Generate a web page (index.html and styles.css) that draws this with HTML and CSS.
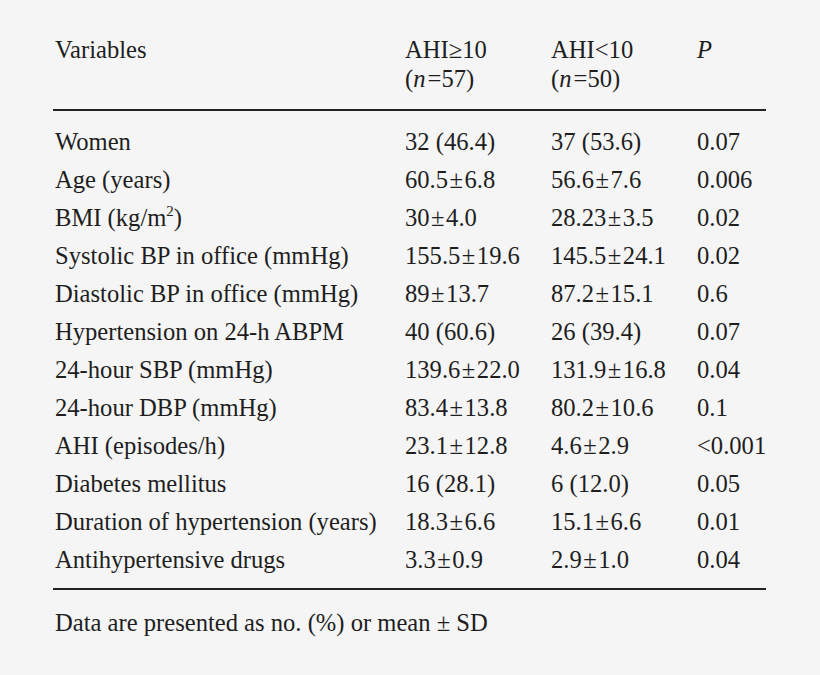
FILE: index.html
```html
<!DOCTYPE html>
<html>
<head>
<meta charset="utf-8">
<link rel="stylesheet" href="styles.css">
</head>
<body>
<div class="page">
  <div class="head">
    <div class="c1">Variables</div>
    <div class="c2">AHI≥10<br>(<i>n</i>&#8202;=57)</div>
    <div class="c3">AHI&lt;10<br>(<i>n</i>&#8202;=50)</div>
    <div class="c4"><i>P</i></div>
  </div>
  <div class="body">
    <div class="row"><div>Women</div><div>32 (46.4)</div><div>37 (53.6)</div><div>0.07</div></div>
    <div class="row"><div>Age (years)</div><div>60.5<span class="pm">±</span>6.8</div><div>56.6<span class="pm">±</span>7.6</div><div>0.006</div></div>
    <div class="row"><div>BMI (kg/m<sup>2</sup>)</div><div>30<span class="pm">±</span>4.0</div><div>28.23<span class="pm">±</span>3.5</div><div>0.02</div></div>
    <div class="row"><div>Systolic BP in office (mmHg)</div><div>155.5<span class="pm">±</span>19.6</div><div>145.5<span class="pm">±</span>24.1</div><div>0.02</div></div>
    <div class="row"><div>Diastolic BP in office (mmHg)</div><div>89<span class="pm">±</span>13.7</div><div>87.2<span class="pm">±</span>15.1</div><div>0.6</div></div>
    <div class="row"><div>Hypertension on 24-h ABPM</div><div>40 (60.6)</div><div>26 (39.4)</div><div>0.07</div></div>
    <div class="row"><div>24-hour SBP (mmHg)</div><div>139.6<span class="pm">±</span>22.0</div><div>131.9<span class="pm">±</span>16.8</div><div>0.04</div></div>
    <div class="row"><div>24-hour DBP (mmHg)</div><div>83.4<span class="pm">±</span>13.8</div><div>80.2<span class="pm">±</span>10.6</div><div>0.1</div></div>
    <div class="row"><div>AHI (episodes/h)</div><div>23.1<span class="pm">±</span>12.8</div><div>4.6<span class="pm">±</span>2.9</div><div>&lt;0.001</div></div>
    <div class="row"><div>Diabetes mellitus</div><div>16 (28.1)</div><div>6 (12.0)</div><div>0.05</div></div>
    <div class="row"><div>Duration of hypertension (years)</div><div>18.3<span class="pm">±</span>6.6</div><div>15.1<span class="pm">±</span>6.6</div><div>0.01</div></div>
    <div class="row"><div>Antihypertensive drugs</div><div>3.3<span class="pm">±</span>0.9</div><div>2.9<span class="pm">±</span>1.0</div><div>0.04</div></div>
  </div>
  <div class="note">Data are presented as no. (%) or mean ± SD</div>
</div>
</body>
</html>
```

FILE: styles.css
```css
html, body {
  margin: 0;
  padding: 0;
  background: #f5f5f5;
}
body {
  font-family: "Liberation Serif", "Times New Roman", serif;
  font-size: 24.6px;
  color: #1e1e1e;
  width: 820px;
  height: 675px;
  overflow: hidden;
}
.page {
  margin-left: 53px;
  width: 713px;
  padding-top: 35px;
}
.head, .row {
  display: grid;
  grid-template-columns: 350px 146px 146px 1fr;
  padding-left: 2px;
}
.head {
  line-height: 29px;
  padding-bottom: 16px;
  border-bottom: 2px solid #222;
}
.body {
  padding-top: 12px;
  padding-bottom: 9px;
  border-bottom: 2px solid #222;
}
.row {
  height: 38px;
  line-height: 38px;
}
.row > div {
  white-space: nowrap;
}
.pm {
  margin: 0 1.5px;
}
sup {
  font-size: 15px;
  line-height: 0;
  vertical-align: 10px;
}
.note {
  padding-left: 2px;
  margin-top: 18px;
  line-height: 29px;
}
```
